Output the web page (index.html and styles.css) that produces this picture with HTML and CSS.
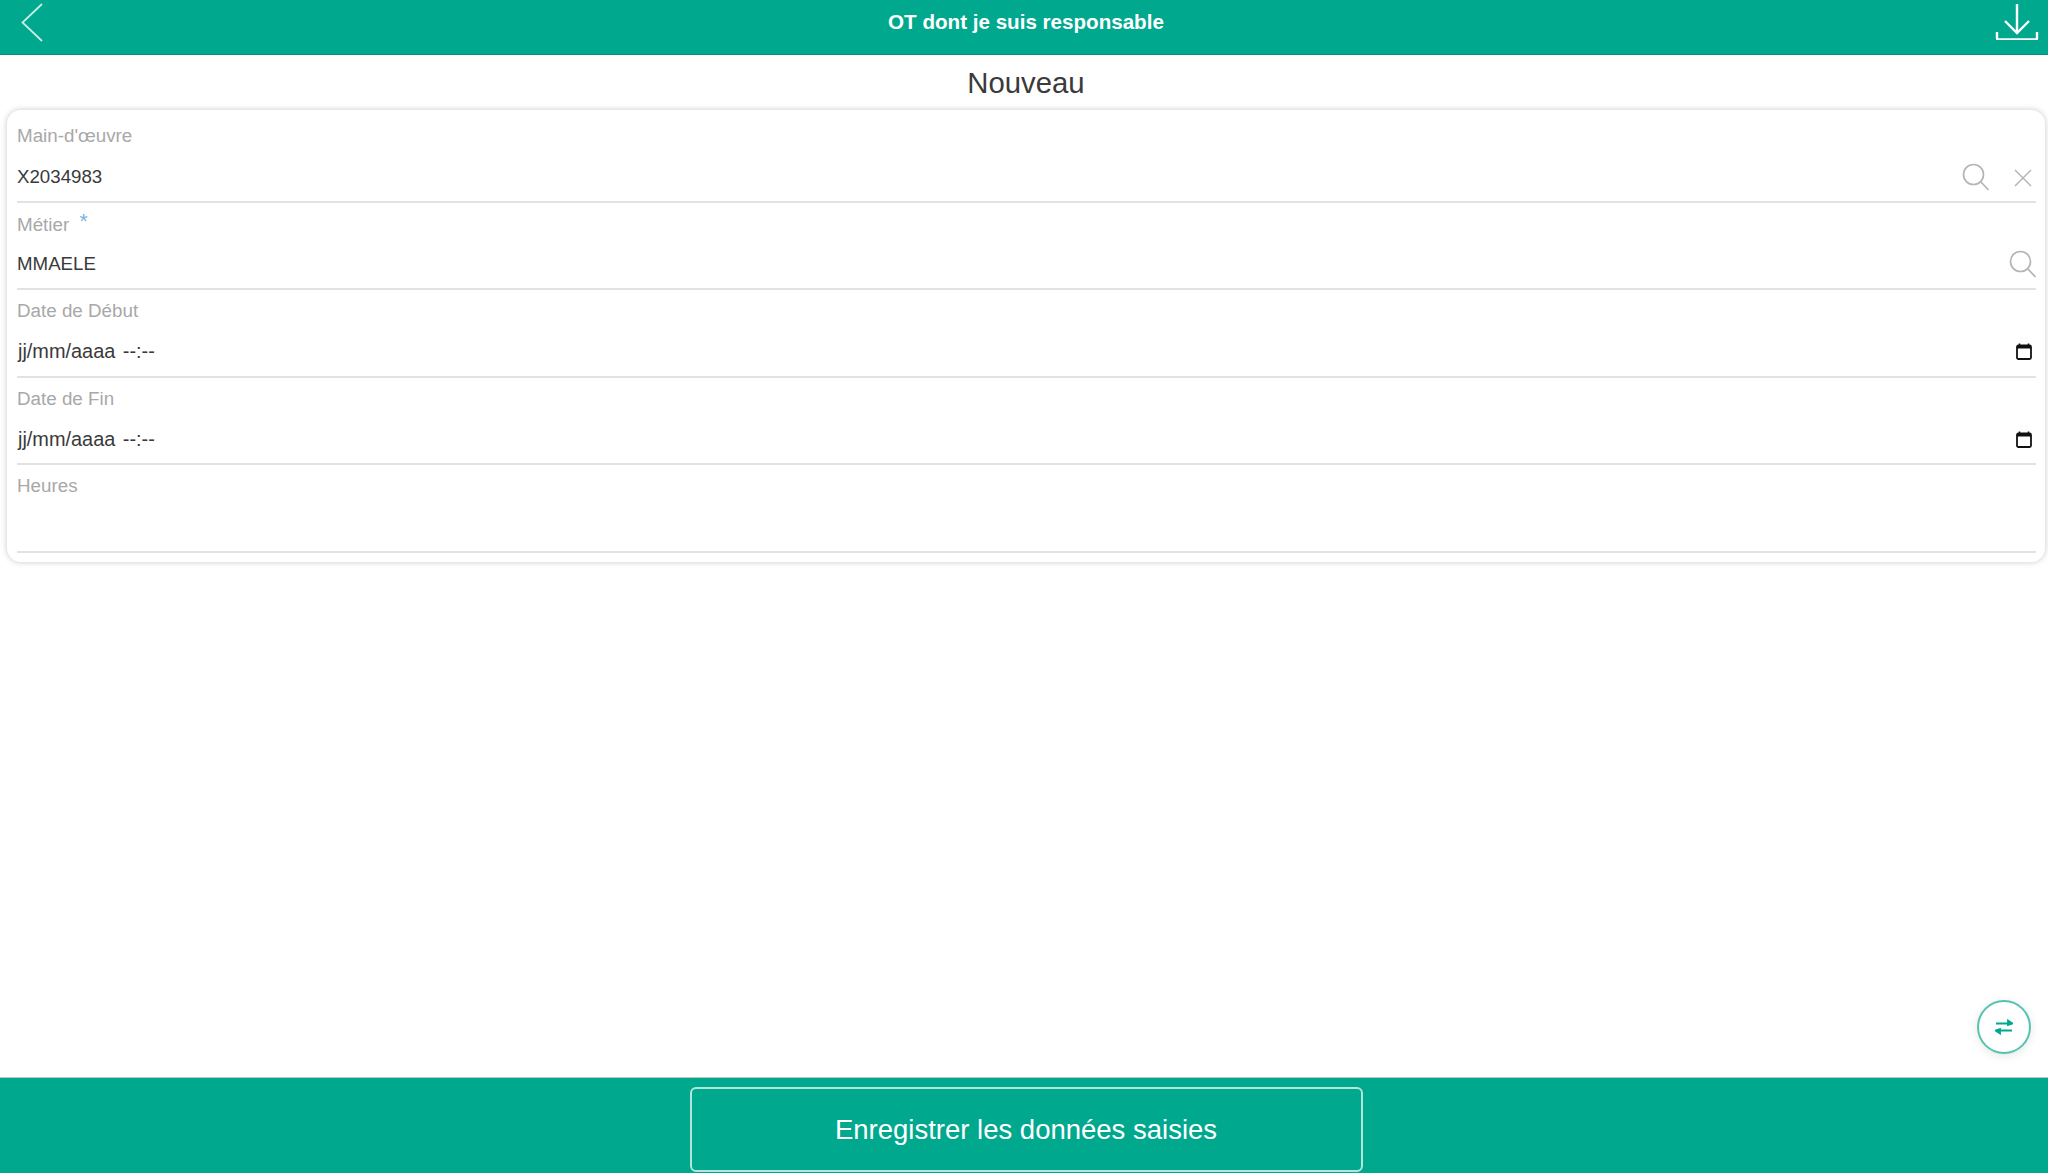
FILE: index.html
```html
<!DOCTYPE html>
<html lang="fr">
<head>
    <meta charset="UTF-8">
    <meta name="viewport" content="width=device-width, initial-scale=1.0">
    <title>OT dont je suis responsable</title>
    <link rel="stylesheet" href="styles.css">
</head>
<body>
    <div class="page">
        <header class="top-bar">
            <a class="top-icon back-icon">
                <svg width="24" height="42" viewBox="0 0 24 42"><path d="M22 4 L2.500 22.500 L22 41" fill="none" stroke="#c4eee5" stroke-width="1.800"/></svg>
            </a>
            <div class="top-title">OT dont je suis responsable</div>
            <a class="top-icon download-icon">
                <svg width="44" height="40" viewBox="0 0 44 40"><path d="M22 4 V33 M10 21 L22 33 L34 21 M2 32 V38 A1.500 1.500 0 0 0 3.500 39.500 H40.500 A1.500 1.500 0 0 0 42 38 V32" fill="none" stroke="#fff" stroke-width="2.400"/></svg>
            </a>
        </header>

        <main class="content">
            <h1 class="form-title">Nouveau</h1>
            <div class="form-card">
                <div class="field">
                    <label>Main-d'œuvre</label>
                    <div class="field-row">
                        <span class="value">X2034983</span>
                        <svg class="search-icon" width="28" height="28" viewBox="0 0 28 28"><circle cx="11.500" cy="11.500" r="10" fill="none" stroke="#b5b5b5" stroke-width="1.700"/><path d="M18.500 18.500 L26.500 27" stroke="#b5b5b5" stroke-width="1.700"/></svg>
                        <svg class="clear-icon" width="18" height="18" viewBox="0 0 18 18"><path d="M1 1 L17 17 M17 1 L1 17" stroke="#b5b5b5" stroke-width="1.500"/></svg>
                    </div>
                </div>
                <div class="field">
                    <label>Métier <span class="required">*</span></label>
                    <div class="field-row">
                        <span class="value">MMAELE</span>
                        <svg class="search-icon last" width="28" height="28" viewBox="0 0 28 28"><circle cx="11.500" cy="11.500" r="10" fill="none" stroke="#b5b5b5" stroke-width="1.700"/><path d="M18.500 18.500 L26.500 27" stroke="#b5b5b5" stroke-width="1.700"/></svg>
                    </div>
                </div>
                <div class="field">
                    <label>Date de Début</label>
                    <div class="field-row">
                        <span class="value date-value">jj/mm/aaaa <span class="time-part">--:--</span></span>
                        <svg class="calendar-icon" width="16" height="17" viewBox="0 0 16 17"><path d="M3.500 0.500 V3 M12.500 0.500 V3" stroke="#111" stroke-width="1.600"/><rect x="1" y="2.500" width="14" height="13.500" rx="1.500" fill="none" stroke="#111" stroke-width="1.800"/><rect x="1" y="2.500" width="14" height="3" fill="#111"/></svg>
                    </div>
                </div>
                <div class="field">
                    <label>Date de Fin</label>
                    <div class="field-row">
                        <span class="value date-value">jj/mm/aaaa <span class="time-part">--:--</span></span>
                        <svg class="calendar-icon" width="16" height="17" viewBox="0 0 16 17"><path d="M3.500 0.500 V3 M12.500 0.500 V3" stroke="#111" stroke-width="1.600"/><rect x="1" y="2.500" width="14" height="13.500" rx="1.500" fill="none" stroke="#111" stroke-width="1.800"/><rect x="1" y="2.500" width="14" height="3" fill="#111"/></svg>
                    </div>
                </div>
                <div class="field">
                    <label>Heures</label>
                    <div class="field-row"></div>
                </div>
            </div>
        </main>

        <footer class="bottom-bar">
            <button class="save-btn">Enregistrer les données saisies</button>
        </footer>
    </div>

    <div class="fab">
        <svg width="18" height="16" viewBox="0 0 18 16"><path d="M1 4.500 H13 V1.500 L17.500 4.500 L13 6 V4.500 M17 11.500 H5 V14.500 L0.500 11.500 L5 10 V11.500" fill="#00a88e" stroke="#00a88e" stroke-width="1.800"/></svg>
    </div>
</body>
</html>
```

FILE: styles.css
```css
* {
    box-sizing: border-box;
}
body {
    font-family: "Liberation Sans", Arial, sans-serif;
    margin: 0;
    background-color: #fff;
    color: #333;
}
.page {
    display: flex;
    flex-direction: column;
    height: 100vh;
    overflow: hidden;
}
.top-bar {
    height: 55px;
    flex-shrink: 0;
    background: #00a88e;
    border-bottom: 1px solid #00907a;
    display: flex;
    align-items: flex-start;
    padding: 0 9px 0 20px;
}
.top-icon {
    display: block;
    height: 42px;
}
.top-title {
    flex: 1;
    padding-left: 13px;
    text-align: center;
    color: #fff;
    font-size: 20.600px;
    font-weight: bold;
    line-height: 43px;
}
.content {
    flex: 1;
    padding: 0 3px 0 7px;
}
.form-title {
    margin: 0;
    height: 55px;
    line-height: 55px;
    font-size: 29.300px;
    font-weight: normal;
    text-align: center;
    color: #3a3a3a;
}
.form-card {
    background: #fff;
    border-radius: 14px;
    padding: 5px 9px 9px 10px;
    box-shadow: 0 0 6px rgba(0,0,0,0.22);
}
.field {
    height: 87.500px;
    display: flex;
    flex-direction: column;
    border-bottom: 2px solid #e2e2e2;
}
.field label {
    font-size: 18.800px;
    line-height: 21px;
    color: #a8a8a8;
    padding-top: 10px;
    height: 40px;
}
.required {
    color: #74b3e0;
    font-size: 21px;
    margin-left: 5px;
    position: relative;
    top: -3px;
}
.field-row {
    display: flex;
    align-items: center;
    height: 40px;
    padding-top: 3px;
}
.value {
    font-size: 18.700px;
    color: #3a3a3a;
    flex: 1;
}
.date-value {
    font-size: 19.900px;
    padding-left: 1px;
}
.time-part {
    margin-left: 2px;
}
.search-icon {
    margin-right: 24px;
}
.search-icon.last {
    margin-right: -1px;
}
.clear-icon {
    margin-right: 4px;
    margin-top: 2px;
}
.calendar-icon {
    margin-right: 4px;
}
.bottom-bar {
    height: 96px;
    flex-shrink: 0;
    background: #00a88e;
    border-top: 1px solid #b8c8c4;
    display: flex;
    justify-content: center;
    padding-top: 9px;
}
.save-btn {
    width: 673px;
    height: 85px;
    margin-left: 4px;
    background: transparent;
    border: 2px solid #b3e5da;
    border-radius: 6px;
    color: #fff;
    font-family: inherit;
    font-size: 27.500px;
    padding: 0;
}
.fab {
    position: absolute;
    left: 1977px;
    top: 1000px;
    width: 54px;
    height: 54px;
    border-radius: 50%;
    background: #fff;
    border: 2px solid #52c4b0;
    box-shadow: 0 2px 10px rgba(0,0,0,0.1);
    display: flex;
    align-items: center;
    justify-content: center;
}
```
